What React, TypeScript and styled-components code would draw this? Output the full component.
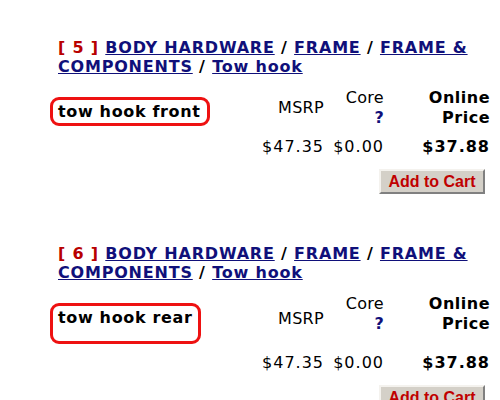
import React from "react";
import styled, { createGlobalStyle } from "styled-components";

const GlobalStyle = createGlobalStyle`
  body {
    margin: 0;
    background: #ffffff;
    font-family: "DejaVu Sans", Verdana, sans-serif;
    color: #000000;
  }
`;

const parts = [
  { index: 5, name: "tow hook front", boxHeight: 29 },
  { index: 6, name: "tow hook rear", boxHeight: 41 },
];

export default function App() {
  return (
    <>
      <GlobalStyle />
      <Page>
        {parts.map((p) => (
          <Section key={p.index}>
            <Heading>
              <Index>[ {p.index} ]</Index> <Crumb href="#">BODY HARDWARE</Crumb> /{" "}
              <Crumb href="#">FRAME</Crumb> / <Crumb href="#">FRAME &amp; COMPONENTS</Crumb> /{" "}
              <Crumb href="#">Tow hook</Crumb>
            </Heading>
            <PriceTable>
              <NameCell>
                <NameBox $height={p.boxHeight}>{p.name}</NameBox>
              </NameCell>
              <HeadCell $middle>MSRP</HeadCell>
              <HeadCell>
                Core
                <br />
                <Help href="#">?</Help>
              </HeadCell>
              <HeadCell $bold>
                Online
                <br />
                Price
              </HeadCell>

              <Spacer />
              <PriceCell>$47.35</PriceCell>
              <PriceCell>$0.00</PriceCell>
              <PriceCell $bold>$37.88</PriceCell>

              <CartCell>
                <CartButton>Add to Cart</CartButton>
              </CartCell>
            </PriceTable>
          </Section>
        ))}
      </Page>
    </>
  );
}

const Page = styled.div`
  padding: 38px 0 0 50px;
  width: 440px;
`;

const Section = styled.div`
  height: 206px;
`;

const Heading = styled.div`
  padding-left: 8px;
  width: 420px;
  font-size: 16px;
  font-weight: bold;
  line-height: 19px;
  letter-spacing: 0.8px;
`;

const Index = styled.span`
  color: #b80000;
`;

const Crumb = styled.a`
  color: #10107a;
  text-decoration: underline;
`;

const PriceTable = styled.div`
  display: grid;
  grid-template-columns: 1fr 70px 60px 106px;
  margin-top: 12px;
  font-size: 16px;
  line-height: 20px;
`;

const NameCell = styled.div`
  padding-top: 9px;
`;

const NameBox = styled.div<{ $height: number }>`
  box-sizing: border-box;
  display: inline-block;
  height: ${(p) => p.$height}px;
  padding: 2px 6px 0 5px;
  border: 3px solid #ee1111;
  border-radius: 9px;
  font-weight: bold;
  line-height: 20px;
  letter-spacing: 0.65px;
`;

const HeadCell = styled.div<{ $middle?: boolean; $bold?: boolean }>`
  text-align: right;
  align-self: ${(p) => (p.$middle ? "center" : "start")};
  font-weight: ${(p) => (p.$bold ? "bold" : "normal")};
  letter-spacing: ${(p) => (p.$bold ? "0.5px" : "0.3px")};
`;

const Help = styled.a`
  color: #10107a;
  font-weight: bold;
  text-decoration: none;
`;

const Spacer = styled.div``;

const PriceCell = styled.div<{ $bold?: boolean }>`
  margin-top: 9px;
  text-align: right;
  font-weight: ${(p) => (p.$bold ? "bold" : "normal")};
  letter-spacing: 1px;
`;

const CartCell = styled.div`
  grid-column: 1 / -1;
  display: flex;
  justify-content: flex-end;
  padding: 12px 5px 0 0;
`;

const CartButton = styled.button`
  box-sizing: border-box;
  width: 106px;
  height: 25px;
  padding: 0;
  background: #d4d0c8;
  border: 2px solid;
  border-color: #f4f2ee #808080 #808080 #f4f2ee;
  color: #c00000;
  font-family: "Liberation Sans", Arial, sans-serif;
  font-size: 16px;
  font-weight: bold;
`;
